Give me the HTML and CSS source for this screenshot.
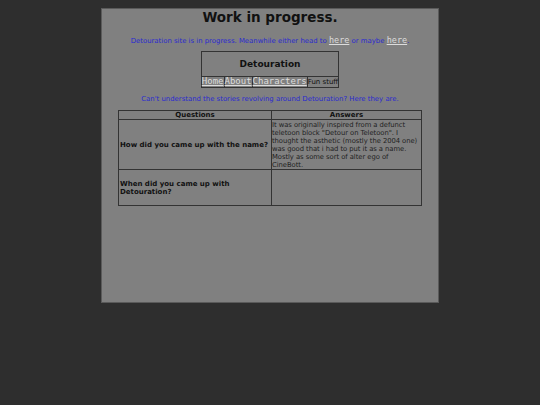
FILE: index.html
```html
<!DOCTYPE html>
<html>
<head>
<meta charset="utf-8">
<link rel="stylesheet" href="styles.css">
</head>
<body>
<div class="page">
  <h1 class="title">Work in progress.</h1>
  <p class="note">Detouration site is in progress. Meanwhile either head to <a class="mono-link" href="#">here</a> or maybe <a class="mono-link" href="#">here</a>.</p>
  <table class="nav">
    <tr><td class="nav-head" colspan="4">Detouration</td></tr>
    <tr class="nav-row">
      <td><a class="mono-link nav-link" href="#">Home</a></td>
      <td><a class="mono-link nav-link" href="#">About</a></td>
      <td><a class="mono-link nav-link" href="#">Characters</a></td>
      <td class="nav-plain">Fun stuff</td>
    </tr>
  </table>
  <p class="note note-2">Can't understand the stories revolving around Detouration? Here they are.</p>
  <table class="faq">
    <tr><th class="col-q">Questions</th><th class="col-a">Answers</th></tr>
    <tr class="row-1">
      <td class="q">How did you came up with the name?</td>
      <td class="a">It was originally inspired from a defunct<br>teletoon block "Detour on Teletoon". I<br>thought the asthetic (mostly the 2004 one)<br>was good that i had to put it as a name.<br>Mostly as some sort of alter ego of<br>CineBott.</td>
    </tr>
    <tr class="row-2">
      <td class="q">When did you came up with Detouration?</td>
      <td class="a"></td>
    </tr>
  </table>
</div>
</body>
</html>
```
FILE: styles.css
```css
html, body {
  background: #2e2e2e;
}
body {
  margin: 8px 0 0 0;
  font-family: "DejaVu Sans", Verdana, sans-serif;
  color: #111;
}
.page {
  width: 336px;
  height: 293px;
  margin: 0 auto;
  background: #808080;
  border: 1px solid #5a5a5a;
  display: flex;
  flex-direction: column;
  align-items: center;
}
.title {
  font-size: 13.5px;
  font-weight: bold;
  margin: 0;
  line-height: 16px;
  color: #111;
}
.note {
  font-size: 6.9px;
  color: #2a2ad0;
  margin: 11px 0 0 0;
  line-height: 9px;
}
.note-2 {
  margin-top: 7px;
}
.mono-link {
  font-family: "DejaVu Sans Mono", monospace;
  font-size: 8.5px;
  color: #dcdcdc;
  text-decoration: underline;
}
.nav {
  margin-top: 5px;
  border-collapse: collapse;
  border: 1px solid #333;
  font-size: 7px;
}
.nav td {
  border: 1px solid #333;
  padding: 0;
  text-align: center;
}
.nav-head {
  height: 24px;
  font-weight: bold;
  font-size: 9px;
}
.nav-row td {
  height: 9px;
  line-height: 9px;
  white-space: nowrap;
}
.nav-link {
  font-size: 9px;
}
.nav-plain {
  color: #111;
}
.faq {
  margin-top: 6px;
  width: 304px;
  border-collapse: collapse;
  border: 1px solid #333;
  font-size: 7px;
  line-height: 8px;
}
.faq th, .faq td {
  border: 1px solid #333;
  padding: 0 1px;
  vertical-align: middle;
}
.faq th {
  font-weight: bold;
  height: 8px;
}
.col-q { width: 150px; }
.q {
  font-weight: bold;
}
.faq td.a {
  color: #222;
  font-size: 6.8px;
  letter-spacing: -0.05px;
  line-height: 8px;
  padding: 0;
  white-space: nowrap;
}
.row-1 td { height: 49px; }
.row-2 td { height: 35px; }
```
